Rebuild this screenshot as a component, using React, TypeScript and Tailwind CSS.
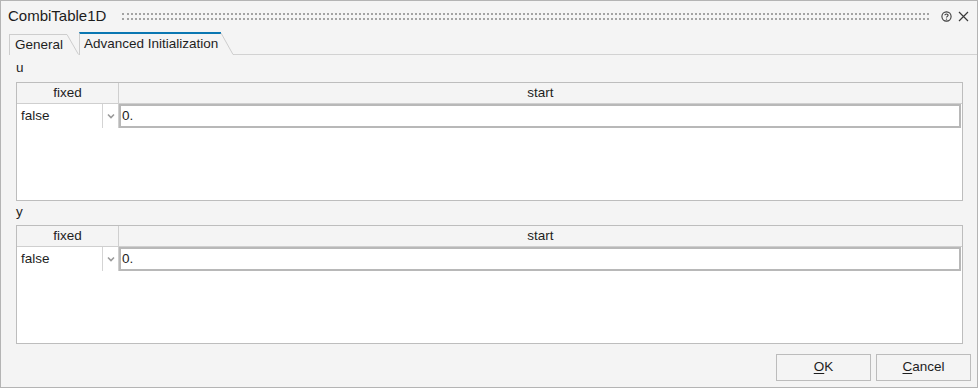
import React from "react";

const font = { fontFamily: '"Liberation Sans", Arial, sans-serif' };

function Grip() {
  return (
    <div className="ml-[16px] mr-[12px] flex flex-1 flex-col gap-[3px] pt-[1px]">
      <div className="border-t-2 border-dotted border-[#a3a3a3]" />
      <div className="border-t-2 border-dotted border-[#a3a3a3]" />
    </div>
  );
}

function ParamTable({ label, labelHeight }: { label: string; labelHeight: string }) {
  return (
    <section>
      <div className={`flex items-center pb-[1px] text-[13.5px] text-[#1e1e1e] ${labelHeight}`}>
        {label}
      </div>
      <div className="flex h-[119px] flex-col border border-[#bdbdbd] bg-white">
        <div className="flex h-[21px] border-b border-[#cfcfcf] bg-[#f4f4f4] text-[13.5px] text-[#1e1e1e]">
          <div className="flex w-[102px] items-center justify-center border-r border-[#cfcfcf]">
            fixed
          </div>
          <div className="flex flex-1 items-center justify-center">start</div>
        </div>
        <div className="flex h-[24px] text-[13.5px] text-[#1e1e1e]">
          <div className="flex w-[102px] border-r border-[#cfcfcf]">
            <div className="flex flex-1 items-center pl-[4px]">false</div>
            <div className="flex w-[16px] items-center justify-center border-l border-[#d4d4d4]">
              <svg width="8" height="6" viewBox="0 0 8 6">
                <path d="M1 1.5 L4 4.5 L7 1.5" fill="none" stroke="#9a9a9a" strokeWidth="1.6" />
              </svg>
            </div>
          </div>
          <div className="mr-[1px] flex flex-1 items-center border-2 border-[#b8b8b8] pl-[1px]">
            0.
          </div>
        </div>
        <div className="flex-1" />
      </div>
    </section>
  );
}

export default function App() {
  return (
    <div
      style={font}
      className="flex h-[388px] w-[978px] flex-col border border-[#b4b4b4] bg-[#f4f4f4]"
    >
      <header className="flex h-[29px] items-center pl-[7px] pr-[8px] pt-[1px]">
        <span className="text-[15px] text-[#1c1c1c]">CombiTable1D</span>
        <Grip />
        <div className="flex items-center gap-[6px]">
          <svg width="11" height="11" viewBox="0 0 11 11">
            <circle cx="5.5" cy="5.5" r="4.6" fill="none" stroke="#3a3a3a" strokeWidth="1.1" />
            <path
              d="M3.9 4.3 C3.9 2.6 7.1 2.6 7.1 4.3 C7.1 5.4 5.5 5.4 5.5 6.6"
              fill="none"
              stroke="#3a3a3a"
              strokeWidth="1.1"
            />
            <circle cx="5.5" cy="8.1" r="0.7" fill="#3a3a3a" />
          </svg>
          <svg width="11" height="11" viewBox="0 0 11 11">
            <path d="M1 1 L10 10 M10 1 L1 10" stroke="#3a3a3a" strokeWidth="1.2" />
          </svg>
        </div>
      </header>

      <nav className="flex h-[25px] items-end pl-[8px]">
        <div className="flex h-[21px] items-end">
          <div className="flex h-full items-center border-l border-t border-[#cdcdcd] pl-[5px] pr-[3px] pt-[1px] text-[13.5px] text-[#1e1e1e]">
            General
          </div>
          <svg width="13" height="21" viewBox="0 0 13 21" className="shrink-0">
            <path d="M0 0.5 L1 0.5 L12.5 20.5" fill="none" stroke="#cdcdcd" strokeWidth="1" />
          </svg>
        </div>
        <div className="flex h-[23px] items-end">
          <div className="flex h-full items-center border-l border-t-2 border-l-[#cdcdcd] border-t-[#0a77b2] pl-[4px] pr-[2px] text-[13.5px] text-[#1e1e1e]">
            Advanced Initialization
          </div>
          <svg width="14" height="23" viewBox="0 0 14 23" className="shrink-0">
            <path d="M0 1 L1 1" stroke="#0a77b2" strokeWidth="2" />
            <path d="M1 1 L13 22.5 L14 22.5" fill="none" stroke="#cdcdcd" strokeWidth="1" />
          </svg>
        </div>
        <div className="flex-1 border-b border-[#d2d2d2]" />
      </nav>

      <main className="flex flex-1 flex-col pl-[15px] pr-[14px]">
        <ParamTable label="u" labelHeight="h-[27px]" />
        <ParamTable label="y" labelHeight="h-[24px]" />
      </main>

      <footer className="flex justify-end gap-[5px] pb-[6px] pr-[6px]">
        <button
          type="button"
          className="h-[27px] w-[95px] border border-[#bcbcbc] bg-[#f4f4f4] text-[13.5px] text-[#1e1e1e]"
        >
          <span className="underline underline-offset-2">O</span>K
        </button>
        <button
          type="button"
          className="h-[27px] w-[95px] border border-[#bcbcbc] bg-[#f4f4f4] text-[13.5px] text-[#1e1e1e]"
        >
          <span className="underline underline-offset-2">C</span>ancel
        </button>
      </footer>
    </div>
  );
}
